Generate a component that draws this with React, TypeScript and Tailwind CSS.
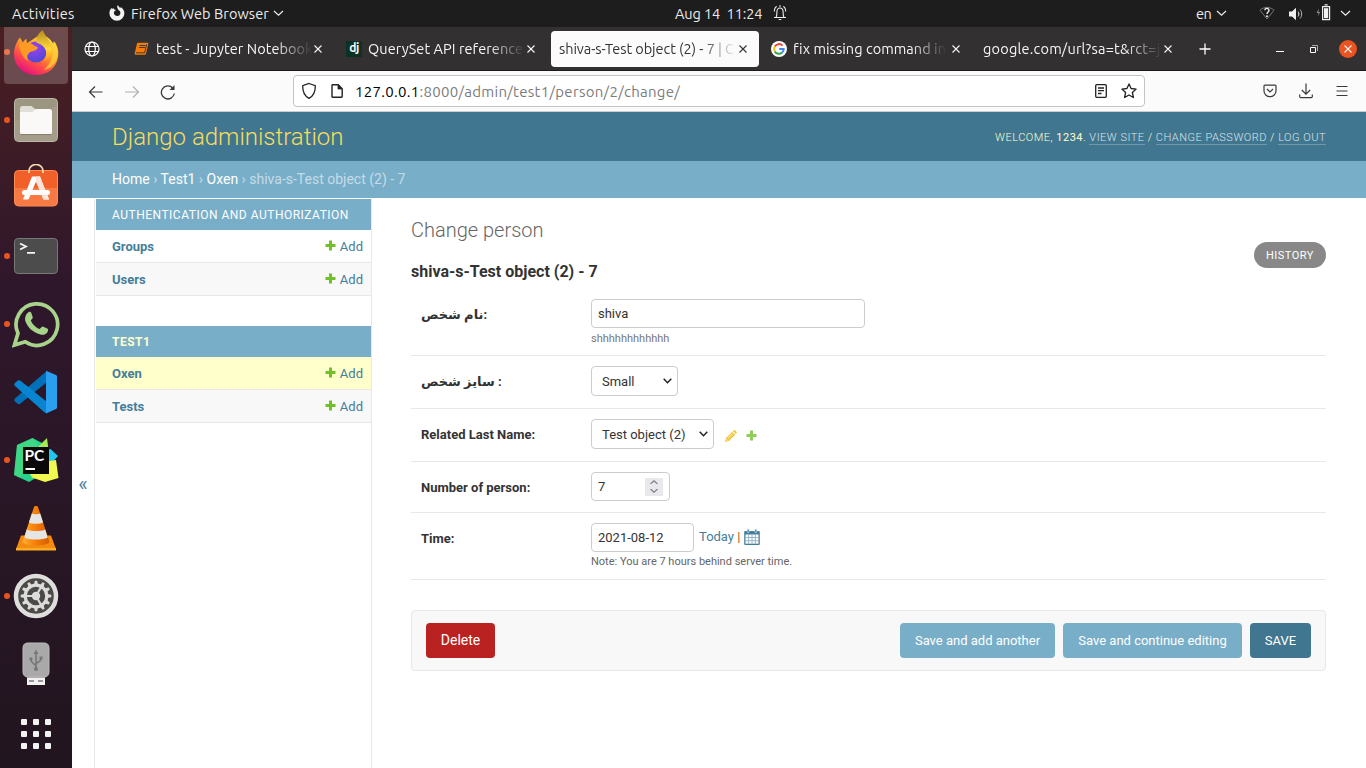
import React from "react";

const Chevron = ({ className = "" }: { className?: string }) => (
  <svg className={className} width="11" height="7" viewBox="0 0 11 7" fill="none" stroke="currentColor" strokeWidth="1.2">
    <path d="M1 1l4.5 4.2L10 1" />
  </svg>
);

const CloseX = ({ className = "" }: { className?: string }) => (
  <svg className={className} width="8" height="8" viewBox="0 0 8 8" stroke="currentColor" strokeWidth="1.1">
    <path d="M.5 .5l7 7M7.5 .5l-7 7" />
  </svg>
);

function TopBar() {
  return (
    <div className="flex h-[27px] w-full items-center bg-[#1d1d1d] text-[14.5px] leading-[27px] text-[#ececec]">
      <div className="w-[109px] shrink-0 pl-3 tracking-[0.32px]">Activities</div>
      <svg width="16" height="16" viewBox="0 0 16 16" className="mb-[2px] shrink-0">
        <path
          fill="#f2f2f2"
          fillRule="evenodd"
          d="M8.4.2c1.6.8 2.3 1.9 2.6 3 .5-.4.7-.8.8-1.3 2 1.3 3.6 3.600 3.600 6.300A7.500 7.500 0 0 1 .4 8.200c0-2.300.9-4 2.100-5.500l.4 1.500c.4-.5 1-1 1.600-1.300l.3 1.400 2.100.7c-.9 1-2 1.300-2 2.800a3.300 3.300 0 0 0 6.500.6c.2-1.500-.5-2.600-1.700-3.200C8.900 4 7.700 2.600 8.400.2z"
        />
      </svg>
      <div className="ml-[6px] w-[142px] shrink-0 whitespace-nowrap tracking-[0.08px]">Firefox Web Browser</div>
      <Chevron />
      <div className="ml-[391px] w-[98px] shrink-0 whitespace-pre pb-px tracking-[-0.1px]">Aug 14  11:24</div>
      <svg width="14" height="16" viewBox="0 0 14 16" fill="none" stroke="#ececec" strokeWidth="1.1" className="mb-[2px] shrink-0">
        <path d="M1 12.500h12M3 12.500c.9-1.500.9-3 .9-5.500C3.900 4.500 5.200 3 7 3s3.100 1.500 3.100 4c0 2.500 0 4 .9 5.500M5.700 14.500h2.600M3.600 1.200C2 2.300 1.200 4 1.200 6.500M10.400 1.200C12 2.300 12.800 4 12.800 6.500M6 1h2" />
      </svg>
      <div className="ml-[409px] w-[20px] shrink-0 tracking-[-0.4px]">en</div>
      <Chevron />
      <svg width="16" height="14" viewBox="0 0 16 14" fill="none" className="mb-px ml-[32px] shrink-0">
        <path d="M1 4.200C5 .4 11 .4 15 4.200L8 13z" stroke="#777" />
        <path d="M5.800 4.200C6 1.700 10.200 1.800 10 4.400 9.900 6 8 6 8 8" stroke="#eee" strokeWidth="1.400" />
        <circle cx="8" cy="10.300" r="1" fill="#eee" />
      </svg>
      <svg width="15" height="14" viewBox="0 0 15 14" fill="none" className="ml-[13px] shrink-0">
        <path d="M1 4.500h3l4-3.700v12.400L4 9.500H1z" fill="#f0f0f0" />
        <path d="M10 4.500c1.200 1.500 1.200 3.500 0 5" stroke="#eee" />
        <path d="M12 2.500c2.200 2.600 2.200 6.400 0 9" stroke="#bbb" />
      </svg>
      <svg width="16" height="17" viewBox="0 0 16 17" className="mb-[2px] ml-[13px] shrink-0">
        <path d="M3 4.500L.5 9h2l-.7 3.500L4.200 8H2.500z" fill="#888" />
        <path d="M6.600 2.600h7v13h-7zM8.500 .9h3.200" fill="none" stroke="#eee" strokeWidth="1.200" />
        <path d="M8 4.200h4.200v10H8z" fill="#f2f2f2" />
      </svg>
      <Chevron className="ml-[8px]" />
    </div>
  );
}

const FirefoxIcon = () => (
  <svg width="48" height="48" viewBox="0 0 48 48" className="mt-px">
    <defs>
      <linearGradient id="ffBody" x1=".8" y1=".1" x2=".25" y2=".95">
        <stop offset="0" stopColor="#ffe23c" />
        <stop offset=".4" stopColor="#ff9a25" />
        <stop offset=".7" stopColor="#ff4a4b" />
        <stop offset="1" stopColor="#e4117f" />
      </linearGradient>
      <radialGradient id="ffGlobe" cx=".45" cy=".3" r=".7">
        <stop offset="0" stopColor="#9b3ff0" />
        <stop offset="1" stopColor="#4f49d3" />
      </radialGradient>
      <linearGradient id="ffFlame" x1="0" y1="0" x2="0" y2="1">
        <stop offset="0" stopColor="#b58a1f" />
        <stop offset=".6" stopColor="#ffd83c" />
        <stop offset="1" stopColor="#ff9020" />
      </linearGradient>
    </defs>
    <path fill="url(#ffBody)" d="M8 8.500l2.800 5c1-1.500 2.200-3 3.500-3.800l.7 4.500L29 5c5 1.500 9 4.600 12.500 10l1.200-2.500C45 17 46.500 20 46.300 25 46 37.500 36.500 46 24 46S2 37 2 25c0-6 2.500-12.500 6-16.500z" />
    <circle cx="24" cy="23" r="10.500" fill="url(#ffGlobe)" />
    <path fill="#ff9b25" d="M7 15.500c7-2 12-2 15 1l4 2c-1 3.500-6.500 3.500-8.500 5-3 2.500-2.500 6-1 9-5-3-8-8-9.500-17z" />
    <path fill="url(#ffFlame)" d="M30.500 1C26 5 24 8 24.200 13.500c5 1.500 9 4.500 9.800 9 .5 4-.5 7-2.500 9.500 6-1.500 8.500-6 8.500-11C40 13 34 9 30.500 1z" />
    <path fill="#ffd23a" d="M41 12c4 6 5.500 12 3.500 18-2 6-7 10-13 11 5-4 8.500-9 9-15 .3-5 1-9 .5-14z" opacity=".75" />
  </svg>
);

const FilesIcon = () => (
  <svg width="48" height="48" viewBox="0 0 48 48">
    <rect x="2.500" y="2.500" width="43" height="43" rx="4" fill="#9c957f" stroke="#bcb7a6" />
    <path d="M3 25L45 10v31a4 4 0 0 1-4 4H7a4 4 0 0 1-4-4z" fill="#aaa390" opacity=".6" />
    <path d="M8 12.500A2.500 2.500 0 0 1 10.500 10h8.500c2 0 2.500 3 5 3h13v8H8z" fill="#e1dfd5" />
    <path d="M8 16h12c2 0 2.500-3 5-3h12.500a2.500 2.500 0 0 1 2.500 2.500V36a2.500 2.500 0 0 1-2.500 2.500h-27A2.500 2.500 0 0 1 8 36z" fill="#faf9f8" />
    <path d="M9 38.500h30" stroke="#847e6c" />
  </svg>
);

const SoftwareIcon = () => (
  <svg width="48" height="48" viewBox="0 0 48 48">
    <rect x="2.500" y="6.500" width="43" height="35.500" rx="4" fill="#f2602a" stroke="#ff8b52" />
    <path d="M3 24h42v14a4 4 0 0 1-4 4H7a4 4 0 0 1-4-4z" fill="#f98450" opacity=".7" />
    <path d="M17 9V7a7 6.500 0 0 1 14 0v2" fill="none" stroke="#f4dcb0" strokeWidth="1.700" />
    <path d="M20 12.500h8l9 23h-5.500L24 17.500l-7.500 18H11z" fill="#fff" />
    <path d="M24 12.500h4l9 23h-5.500L24 17.500z" fill="#fce4da" />
    <rect x="10" y="26" width="28" height="5" rx="2.500" fill="#fff" />
  </svg>
);

const TerminalIcon = () => (
  <svg width="48" height="48" viewBox="0 0 48 48">
    <rect x="2.500" y="6.500" width="43" height="35" rx="3.500" fill="#4c4c4c" stroke="#777" />
    <path d="M8 11.500l6 3-6 3M15 20.800h8" fill="none" stroke="#f5f5f5" strokeWidth="1.800" />
  </svg>
);

const WhatsAppIcon = () => (
  <svg width="48" height="48" viewBox="1 1 49 49" fill="none" className="mb-px">
    <path d="M3.500 47l3.600-12A21.200 21.200 0 1 1 14.500 43.700z" stroke="#a7d38a" strokeWidth="3.800" strokeLinejoin="miter" />
    <path d="M17.800 13.500c1.500-1 2.500-.5 3.200 1.500l1.200 3.500c.3 1.200-2 2.500-2 3.500 1.500 4 5 7 8.500 8.500 1.200.4 2.500-2.800 3.700-2.400l4.500 2c1.200.5 1 1.500.6 3-1.200 3-4.500 3.900-7.500 3.200-8-2-13.500-8-15.300-13.500-1-3.500.3-7.500 3.100-9.300z" fill="#a7d38a" />
  </svg>
);

const VSCodeIcon = () => (
  <svg width="44" height="44" viewBox="0 0 44 44">
    <path fill="#0071b8" d="M1 31.500c-1-1-.8-2 0-3L28 5l5-4v11L6.500 33.500c-1 .8-2 .8-3 0z" />
    <path fill="#0884d0" d="M1 13l2.500-2.200c1-.8 2-.8 3 0L33 32v10.500c-1.500.7-2.500 0-3.500-1L1 16c-1-1-1-2 0-3z" />
    <path fill="#2a9ff0" d="M32 .8L42 5c.7.3 1 1 1 2v30c0 1-.3 1.600-1 2l-10 4.500z" />
  </svg>
);

const PyCharmIcon = () => (
  <svg width="48" height="48" viewBox="0 0 48 48">
    <path fill="#23d38c" d="M5 9L20.500 2 32 8v29L17 46 2 39z" />
    <path fill="#71e07b" d="M5 9L20.500 2 26 8 8 42l-6-3z" opacity=".35" />
    <path fill="#22c7ed" d="M35 14l3.500-1L46 20l-9 10z" />
    <path fill="#a4ec57" d="M26 11l9-9 1.500 12H26z" />
    <path fill="#f0f94e" d="M17 36l20-11 7-1 2.500 18L33 46l-13-4.500z" />
    <rect x="11" y="11" width="26" height="27" fill="#090909" />
    <text x="12.500" y="25" fill="#fff" className="font-['Lato',sans-serif] text-[15.5px] font-bold">PC</text>
    <path fill="#fff" d="M13.500 32h9.500v2h-9.500z" />
  </svg>
);

const VlcIcon = () => (
  <svg width="44" height="48" viewBox="0 0 44 48">
    <defs>
      <linearGradient id="cone" x1="0" x2="1">
        <stop offset="0" stopColor="#ffb13a" />
        <stop offset=".45" stopColor="#f98008" />
        <stop offset="1" stopColor="#d65b00" />
      </linearGradient>
    </defs>
    <path d="M7 31.500h30L42 45H2z" fill="#f48a10" />
    <path d="M2 44h40v2.500H2z" fill="#ffac25" />
    <path d="M20 3c.5-1.200 3.500-1.200 4 0l11.500 35c-2 4.500-25 4.500-27 0z" fill="url(#cone)" />
    <path d="M17.800 9.500c2 1 6.400 1 8.400 0l2.900 9c-2.500 1.800-11.700 1.800-14.200 0z" fill="#e5e5e5" />
    <path d="M12.800 25.500c4 2 14.400 2 18.400 0l2.500 8c-5 2.800-18.400 2.800-23.400 0z" fill="#e5e5e5" />
  </svg>
);

const gearTeeth = Array.from({ length: 12 }, (_, i) => i * 30);

const SettingsIcon = () => (
  <svg width="48" height="48" viewBox="0 0 48 48" fill="none">
    <circle cx="24" cy="24" r="20" fill="#4b4a48" stroke="#dededc" strokeWidth="4.500" />
    <circle cx="24" cy="24" r="10.800" stroke="#dcdcda" strokeWidth="3.200" />
    {gearTeeth.map((a) => (
      <path key={a} d="M22 13l.8-4.300h2.400l.8 4.300z" fill="#dcdcda" transform={`rotate(${a} 24 24)`} />
    ))}
    <circle cx="24" cy="24" r="4.200" fill="#dededc" />
    <path d="M24 24H14M24 24l5-8.700M24 24l5 8.700" stroke="#dcdcda" strokeWidth="2.200" />
  </svg>
);

const UsbIcon = () => (
  <svg width="48" height="48" viewBox="0 0 48 48" fill="none">
    <rect x="11" y="3" width="26" height="34" rx="4.500" fill="#a9a9a9" stroke="#bcbcbc" />
    <path d="M15 37.500h18V45H15z" fill="#f2f2f0" />
    <path d="M17 40h5v2h-5zM26 40h5v2h-5z" fill="#999" />
    <path d="M24 29V12M24 26.500c-1-3.500-5-2.500-5-7M24 24.500c1-3.500 5-2 5-6" stroke="#777" strokeWidth="1.600" />
    <path d="M21.500 14L24 9.500l2.500 4.500z" fill="#777" />
    <circle cx="24" cy="29" r="2" fill="#777" />
    <circle cx="19" cy="19" r="1.700" fill="#777" />
    <path d="M27.500 16.500h3v3h-3z" fill="#777" />
  </svg>
);

const dock = [
  { Icon: FirefoxIcon, dot: true, active: true },
  { Icon: FilesIcon, dot: true },
  { Icon: SoftwareIcon },
  { Icon: TerminalIcon, dot: true },
  { Icon: WhatsAppIcon, dot: true },
  { Icon: VSCodeIcon },
  { Icon: PyCharmIcon, dot: true },
  { Icon: VlcIcon },
  { Icon: SettingsIcon, dot: true },
  { Icon: UsbIcon },
];

function Dock() {
  return (
    <div className="h-full w-[72px] shrink-0 overflow-hidden bg-linear-to-b from-[#4b1f20] via-[#2f172b] via-35% to-[#21151f]">
      <div className="-mt-[9px]">
        {dock.map(({ Icon, dot, active }, i) => (
          <div key={i} className="flex h-[68px] items-center">
            <div className="flex w-1 shrink-0 justify-start">
              {dot && <i className="ml-1 block size-[6px] shrink-0 rounded-full bg-[#ea5420]" />}
            </div>
            <div className={active ? "flex h-16 w-16 items-center justify-center rounded bg-white/20" : "flex h-16 w-16 items-center justify-center"}>
              <Icon />
            </div>
          </div>
        ))}
      </div>
      <div className="flex h-[72px] items-center justify-center">
        <div className="grid grid-cols-3 gap-[6px]">
          {gearTeeth.slice(0, 9).map((n) => (
            <i key={n} className="size-[6px] rounded-[1px] bg-[#f2f2f0]" />
          ))}
        </div>
      </div>
    </div>
  );
}

const fade = "overflow-hidden whitespace-nowrap [mask-image:linear-gradient(to_right,black_calc(100%-36px),transparent)]";

function Tabs() {
  return (
    <div className="flex h-11 items-center border-b border-[#1c1b1c] bg-[#323031] text-[14.5px] leading-[20px] text-[#f6f6f6]">
      <svg width="16" height="16" viewBox="0 0 16 16" fill="none" stroke="#fff" strokeWidth="1.200" className="ml-[12px] shrink-0">
        <circle cx="8" cy="8" r="7" />
        <ellipse cx="8" cy="8" rx="3.300" ry="7" />
        <path d="M1.500 5.500h13M1.500 10.500h13" />
      </svg>
      <svg width="15" height="14" viewBox="0 0 15 14" className="ml-[34px] shrink-0">
        <path d="M4 .8h9.500c.7 0 1 .5.800 1.200l-2.300 9.500c-.2.800-.7 1.300-1.500 1.300H2C.8 12.800.5 12 .8 11L3 1.600C3.100 1 3.400.8 4 .8z" fill="#f57c0a" />
        <path d="M5.500 3.500h6M5 5.500h6M2 10.800h8.500l2.300-8.500" stroke="#323031" fill="none" strokeWidth=".9" />
      </svg>
      <div className={`ml-[7px] mt-px w-[156px] shrink-0 tracking-[0.06px] ${fade}`}>test - Jupyter Notebook</div>
      <CloseX className="ml-[2px] shrink-0" />
      <div className="ml-[24px] flex h-4 w-4 shrink-0 items-center justify-center bg-[#0c3226] pb-[2px] text-[12px] font-bold leading-none tracking-[-0.5px]">dj</div>
      <div className={`ml-[6px] mt-px w-[157px] shrink-0 tracking-[0.07px] ${fade}`}>QuerySet API reference</div>
      <CloseX className="ml-[2px] shrink-0" />
      <div className="ml-[16px] flex h-9 w-[208px] shrink-0 items-center rounded bg-[#fbfbfb] pl-[8px] text-[#333]">
        <div className={`mt-px w-[178px] shrink-0 tracking-[-0.08px] ${fade}`}>shiva-s-Test object (2) - 7 | C</div>
        <CloseX className="ml-[2px] shrink-0" />
      </div>
      <svg width="16" height="16" viewBox="0 0 16 16" fill="none" strokeWidth="2" className="ml-[12px] shrink-0">
        <circle cx="8" cy="8" r="8" fill="#fff" />
        <path d="M3.800 5.600A4.800 4.800 0 0 1 11.500 4.600" stroke="#ea4335" />
        <path d="M3.800 5.600a4.800 4.800 0 0 0 0 4.800" stroke="#fbbc05" />
        <path d="M3.800 10.400a4.800 4.800 0 0 0 7.400 1.200" stroke="#34a853" />
        <path d="M8.200 8h4.500a4.800 4.800 0 0 1-1.500 3.600" stroke="#4285f4" />
      </svg>
      <div className={`ml-[6px] w-[154px] shrink-0 tracking-[0.05px] ${fade}`}>fix missing command in</div>
      <CloseX className="ml-[5px] shrink-0" />
      <div className={`ml-[23px] mt-px w-[179px] shrink-0 tracking-[0.22px] ${fade}`}>google.com/url?sa=t&amp;rct=j</div>
      <CloseX className="ml-[2px] shrink-0" />
      <svg width="12" height="12" viewBox="0 0 12 12" stroke="#fff" strokeWidth="1.300" className="ml-[27px] mt-px shrink-0">
        <path d="M6 .5v11M.5 6h11" />
      </svg>
      <i className="ml-[65px] mt-[5px] h-px w-[8px] shrink-0 bg-white" />
      <svg width="8" height="8" viewBox="0 0 8 8" fill="none" className="ml-[26px] shrink-0">
        <path d="M.5 2.500h5v5h-5z" stroke="#fff" />
        <path d="M2 .5h5.500V6" stroke="#aaa" />
      </svg>
      <div className="ml-[21px] flex size-[18px] shrink-0 items-center justify-center rounded-full bg-[#e95420]">
        <CloseX />
      </div>
    </div>
  );
}

function Toolbar() {
  return (
    <div className="flex h-[41px] items-center border-b border-[#cccccc] bg-[#fbfbfb] text-[#2b2b2b]">
      <svg width="16" height="14" viewBox="0 0 16 14" fill="none" stroke="#3a3a3a" strokeWidth="1.200" className="ml-4 mt-px shrink-0">
        <path d="M14.500 7H1.500M7 1.500L1.500 7 7 12.500" />
      </svg>
      <svg width="16" height="14" viewBox="0 0 16 14" fill="none" stroke="#b2b2b2" strokeWidth="1.200" className="ml-5 mt-px shrink-0">
        <path d="M1 7h13.500M9 1.500L14.500 7 9 12.500" />
      </svg>
      <svg width="16" height="16" viewBox="0 0 16 16" fill="none" stroke="#3a3a3a" strokeWidth="1.300" className="ml-5 mt-px shrink-0">
        <path d="M14.300 9.500a6.500 6.500 0 1 1-1.500-5.300" />
        <path d="M14.500 1v5h-5z" fill="#3a3a3a" stroke="none" />
      </svg>
      <div className="ml-[117px] flex h-8 w-[852px] shrink-0 items-center rounded border border-[#c4c4c4] bg-white">
        <svg width="16" height="18" viewBox="0 0 16 18" fill="none" stroke="#222" strokeWidth="1.300" className="ml-[7px] shrink-0">
          <path d="M8 1.500l6.300 2.200c.1 5.500-1.300 10-6.300 12.600C3 13.700 1.600 9.200 1.700 3.700z" />
        </svg>
        <svg width="12" height="14" viewBox="0 0 12 14" fill="none" stroke="#222" strokeWidth="1.400" className="ml-[14px] shrink-0">
          <path d="M1 1.500C1 1 1.200.8 1.700.8h5.600l3.900 3.900v7.800c0 .5-.2.700-.7.700H1.700c-.5 0-.7-.2-.7-.7z" />
          <path d="M7 1v4h4z" fill="#222" strokeWidth=".8" />
        </svg>
        <div className="ml-[12px] mt-px w-[740px] shrink-0 text-[15px] leading-[20px] tracking-[0.29px] text-[#7c7c7c]">
          <span className="text-black">127.0.0.1</span>:8000/admin/test1/person/2/change/
        </div>
        <svg width="12" height="14" viewBox="0 0 12 14" fill="none" stroke="#222" strokeWidth="1.300" className="shrink-0">
          <rect x=".7" y=".7" width="10.600" height="12.600" rx="1" />
          <path d="M3 4h6M3 6.700h6M3 9.500h3.500" />
        </svg>
        <svg width="16" height="16" viewBox="0 0 16 16" fill="none" stroke="#222" strokeWidth="1.300" strokeLinejoin="round" className="ml-[14px] shrink-0">
          <path d="M8 .9l2.100 4.600 5 .6-3.700 3.400 1 5L8 12l-4.400 2.500 1-5L.9 6.100l5-.6z" />
        </svg>
      </div>
      <svg width="14" height="14" viewBox="0 0 14 14" fill="none" stroke="#3a3a3a" strokeWidth="1.200" className="ml-[118px] shrink-0">
        <path d="M1 2.200C1 1.500 1.400 1.100 2 1.100h10c.6 0 1 .4 1 1.100V7c0 3-2.700 5.700-6 5.700S1 10 1 7z" />
        <path d="M4 5l3 3 3-3" />
      </svg>
      <svg width="14" height="16" viewBox="0 0 14 16" fill="none" stroke="#3a3a3a" strokeWidth="1.200" className="mb-px ml-[22px] shrink-0">
        <path d="M7 .5V11M2.800 7L7 11.200 11.200 7M.7 11.500v2c0 .7.400 1.200 1.100 1.200h10.400c.7 0 1.100-.5 1.100-1.200v-2" />
      </svg>
      <svg width="12" height="12" viewBox="0 0 12 12" stroke="#3a3a3a" strokeWidth="1.100" className="ml-[23px] shrink-0">
        <path d="M.5 1.500h11M.5 6h11M.5 10.500h11" />
      </svg>
    </div>
  );
}

const Plus = ({ className = "" }: { className?: string }) => (
  <svg className={className} width="11" height="11" viewBox="0 0 11 11">
    <path d="M4 .5h3V4h3.500v3H7v3.500H4V7H.5V4H4z" fill="currentColor" />
  </svg>
);

function AppList({ title, items, current }: { title: string; items: string[]; current?: string }) {
  return (
    <div className="mb-[30px]">
      <div
        className={
          current
            ? "h-[31px] bg-[#79aec8] pl-4 text-[12px] font-bold uppercase leading-[32px] tracking-[0.5px] text-[#ffffcc]"
            : "h-[31px] bg-[#79aec8] pl-4 text-[12px] uppercase leading-[32px] tracking-[0.5px] text-white"
        }
      >
        {title}
      </div>
      {items.map((it, i) => (
        <div
          key={it}
          className={`flex h-[33px] items-center border-b border-[#e8e8e8] pl-4 pr-2 text-[13px] leading-[32px] text-[#447e9b] ${
            it === current ? "bg-[#ffffcc]" : i % 2 ? "bg-[#f8f8f8]" : "bg-white"
          }`}
        >
          <b className="grow pt-px leading-[31px]">{it}</b>
          <Plus className="-mt-[2px] mr-[4px] text-[#70bf2b]" />
          <span className="pt-px leading-[31px]">Add</span>
        </div>
      ))}
    </div>
  );
}

function Row({ label, h, children }: { label: string; h: string; children: React.ReactNode }) {
  return (
    <div className={`flex border-b border-[#e8e8e8] pl-[10px] pt-[10px] ${h}`}>
      <div className="w-[170px] shrink-0 pt-[8px] text-[13px] font-bold leading-[16px]">{label}</div>
      <div className="text-[13px]">{children}</div>
    </div>
  );
}

const DownArrow = () => (
  <svg width="9" height="6" viewBox="0 0 9 6" fill="none" stroke="#222" strokeWidth="1.500">
    <path d="M.7 .8l3.800 3.900L8.300 .8" />
  </svg>
);

const link = "border-b border-white/25 text-[#d9e5eb]";

export default function App() {
  return (
    <div className="flex h-[768px] w-[1366px] flex-col overflow-hidden bg-white font-['Ubuntu','Noto_Sans',sans-serif]">
      <TopBar />
      <div className="flex min-h-0 grow">
        <Dock />
        <div className="flex min-w-0 grow flex-col">
          <Tabs />
          <Toolbar />
          <div className="flex min-h-0 grow flex-col font-['Roboto','DejaVu_Sans',sans-serif] text-[#333]">
            <div className="flex h-[49px] shrink-0 items-center justify-between bg-[#417690] pl-10 pr-10">
              <div className="pt-px text-[24px] font-light leading-[48px] text-[#f5dd5d]">Django administration</div>
              <div className="pt-[2px] text-[11px] font-light leading-[15px] tracking-[0.5px] text-[#ffffcc]">
                WELCOME, <b>1234</b>. <span className={link}>VIEW SITE</span> / <span className={link}>CHANGE PASSWORD</span> / <span className={link}>LOG OUT</span>
              </div>
            </div>
            <div className="h-[37px] shrink-0 bg-[#79aec8] pl-10 text-[14px] leading-[36px] text-[#c4dce8]">
              <span className="text-white">Home</span> › <span className="text-white">Test1</span> › <span className="text-white">Oxen</span> › shiva-s-Test object (2) - 7
            </div>
            <div className="flex min-h-0 grow">
              <div className="flex w-[22px] shrink-0 items-center justify-center pt-[2px] text-[20px] text-[#447e9b]">
                <span className="leading-[20px]">«</span>
              </div>
              <div className="w-[278px] shrink-0 border-l border-r border-[#e8e8e8] pl-px pt-px">
                <AppList title="Authentication and Authorization" items={["Groups", "Users"]} />
                <AppList title="Test1" items={["Oxen", "Tests"]} current="Oxen" />
              </div>
              <div className="grow pl-[39px] pr-10">
                <h1 className="pt-5 text-[20px] font-light leading-[24px] text-[#666]">Change person</h1>
                <div className="flex h-[47px] justify-between">
                  <h2 className="pt-[20px] text-[16px] font-bold leading-[19px]">shiva-s-Test object (2) - 7</h2>
                  <div className="h-[26px] w-[72px] rounded-full bg-[#888] text-center text-[11px] leading-[27px] tracking-[0.5px] text-white">HISTORY</div>
                </div>
                <Row label="نام شخص:" h="h-[67px]">
                  <div className="h-[29px] w-[274px] rounded border border-[#ccc] pl-[6px] leading-[27px]">shiva</div>
                  <div className="pt-[4px] text-[11px] leading-[13px] text-[#777]">shhhhhhhhhhhh</div>
                </Row>
                <Row label="سایز شخص :" h="h-[53px]">
                  <div className="flex h-[30px] w-[87px] items-center justify-between rounded border border-[#ccc] pl-[10px] pr-[5px]">
                    <span className="pt-[2px] leading-[26px]">Small</span> <DownArrow />
                  </div>
                </Row>
                <Row label="Related Last Name:" h="h-[53px]">
                  <div className="flex items-center">
                    <div className="flex h-[30px] w-[123px] items-center justify-between rounded border border-[#ccc] pl-[10px] pr-[5px]">
                      <span className="pt-[2px] leading-[26px]">Test object (2)</span> <DownArrow />
                    </div>
                    <svg width="12" height="12" viewBox="0 0 12 12" className="ml-[11px] mt-[3px]">
                      <path d="M0 12l1-4L7.200 1.800l3 3L4 11zM7.900 1.200L9 .3c.3-.3.8-.3 1.100 0l1.600 1.600c.3.300.3.800 0 1.100l-.9 1z" fill="#f2c94a" />
                      <path d="M1.400 9.300l1.300 1.300M3.300 7.800l4-4" stroke="#fff" strokeWidth=".6" />
                    </svg>
                    <Plus className="ml-[9px] mt-[3px] text-[#8fce58]" />
                  </div>
                </Row>
                <Row label="Number of person:" h="h-[51px]">
                  <div className="flex h-[29px] w-[79px] items-center justify-between rounded border border-[#ccc] pl-[6px] pr-[6px]">
                    7
                    <div className="flex h-[18px] w-[18px] flex-col items-center justify-center gap-[5px] bg-[#e9e9ed]">
                      <svg width="8" height="4" viewBox="0 0 8 4" fill="none" stroke="#85858d" strokeWidth="1.300">
                        <path d="M.5 4L4 .8 7.500 4" />
                      </svg>
                      <svg width="8" height="4" viewBox="0 0 8 4" fill="none" stroke="#85858d" strokeWidth="1.300">
                        <path d="M.5 0L4 3.200 7.500 0" />
                      </svg>
                    </div>
                  </div>
                </Row>
                <Row label="Time:" h="h-[67px]">
                  <div className="flex h-[29px] items-center">
                    <div className="h-[29px] w-[103px] rounded border border-[#ccc] pl-[6px] leading-[27px]">2021-08-12</div>
                    <div className="ml-[5px] whitespace-pre pb-[2px] text-[#447e9b]">
                      Today <span className="text-[#a05a20]">|</span>
                    </div>
                    <svg width="16" height="16" viewBox="0 0 16 16" className="mb-[2px] ml-[4px]">
                      <path d="M1.500 2h13c.8 0 1.300.5 1.300 1.300v11.400c0 .8-.5 1.300-1.300 1.300h-13C.7 16 .2 15.500.2 14.700V3.300C.2 2.500.7 2 1.500 2z" fill="#447e9b" />
                      <path d="M1.500 5.500h13v9.200h-13z" fill="#fff" />
                      <path d="M1.500 8.500h13M1.500 11.700h13M4.700 5.500v9.500M8 5.500v9.500M11.300 5.500v9.500" stroke="#7fa6ba" strokeWidth=".8" />
                      <path d="M3.200.3h2v3h-2zM10.800.3h2v3h-2z" fill="#447e9b" stroke="#fff" strokeWidth=".5" />
                    </svg>
                  </div>
                  <div className="whitespace-nowrap pt-[3px] text-[11px] leading-[13px] text-[#666]">Note: You are 7 hours behind server time.</div>
                </Row>
                <div className="mt-[30px] flex h-[61px] items-center gap-2 rounded border border-[#e8e8e8] bg-[#f8f8f8] px-[14px] pb-px text-center text-[13px] leading-[35px] text-white">
                  <div className="mr-auto h-[35px] w-[69px] rounded bg-[#ba2121] text-[14px] leading-[34px]">Delete</div>
                  <div className="h-[35px] w-[155px] rounded bg-[#79aec8]">Save and add another</div>
                  <div className="h-[35px] w-[179px] rounded bg-[#79aec8]">Save and continue editing</div>
                  <div className="h-[35px] w-[61px] rounded bg-[#417690]">SAVE</div>
                </div>
              </div>
            </div>
          </div>
        </div>
      </div>
    </div>
  );
}
